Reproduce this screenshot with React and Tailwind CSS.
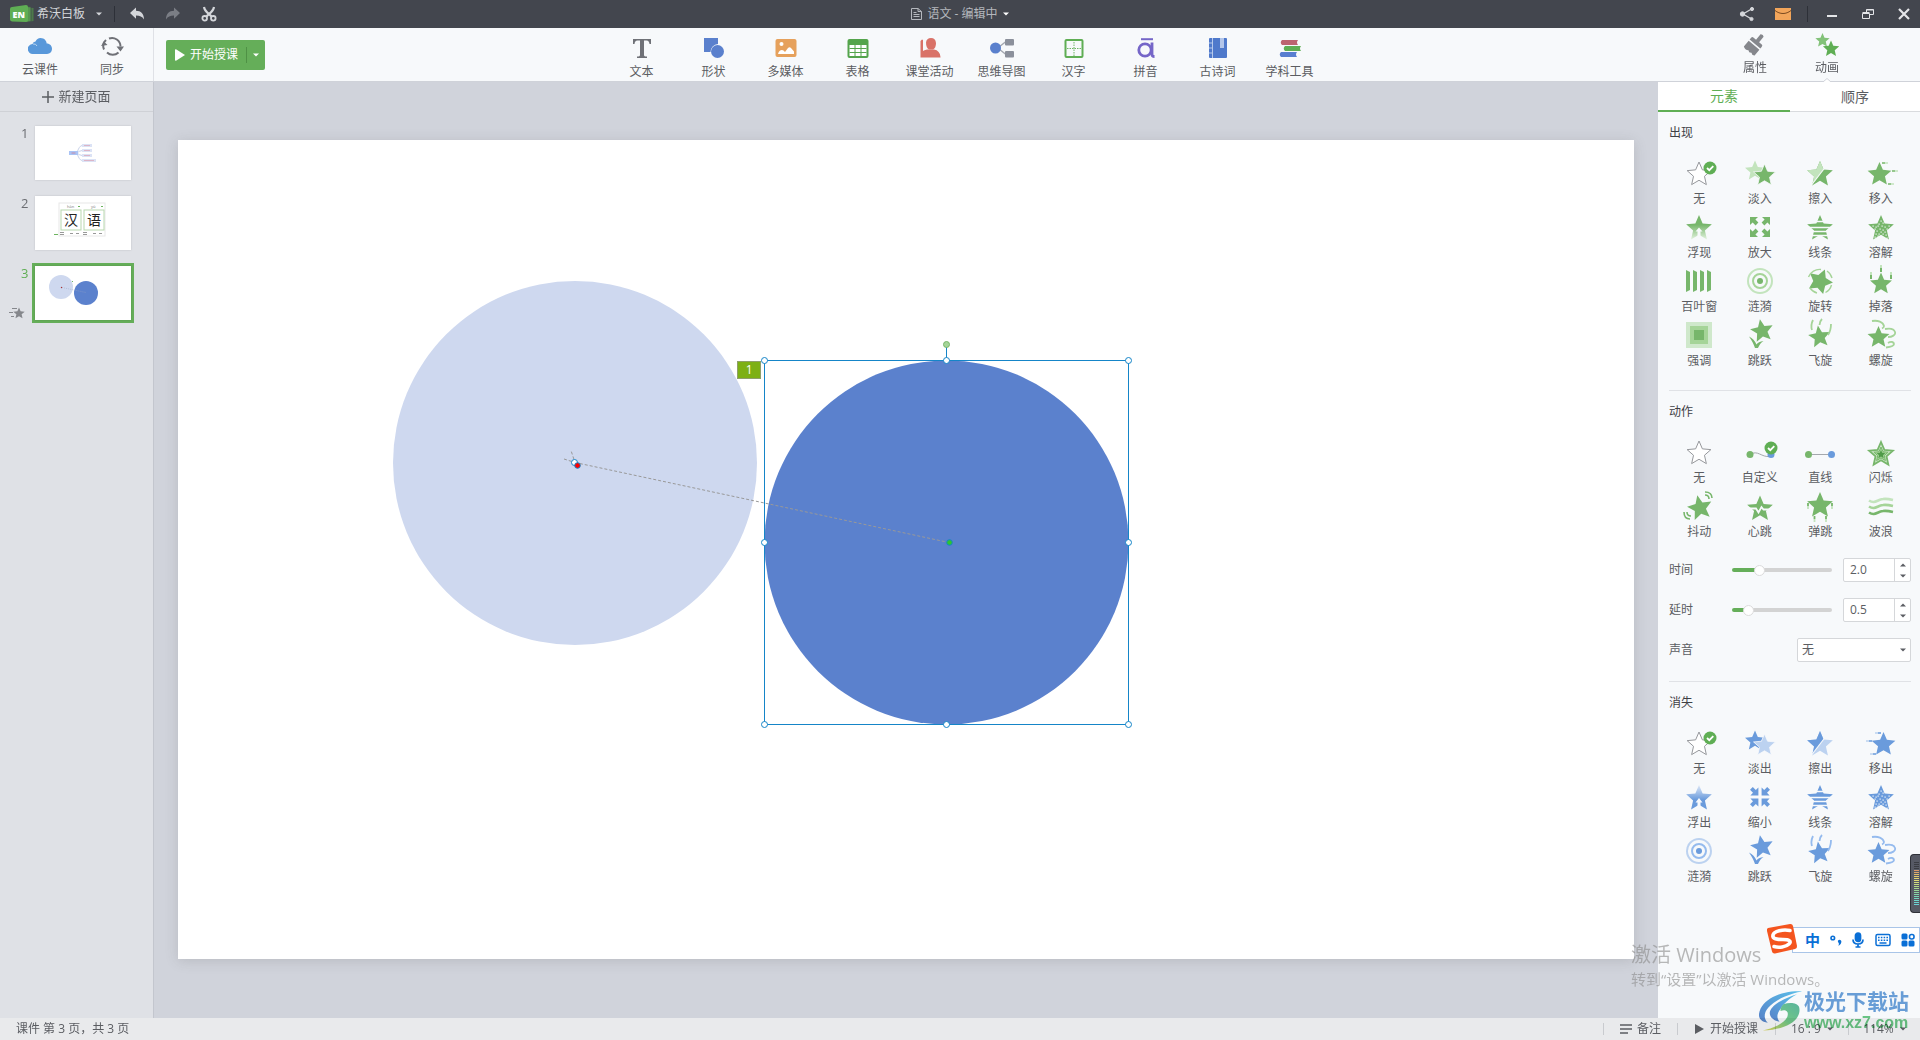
import React, { useState } from 'react';

const GREEN = { main: '#77b66b', mid: '#a5d498', light: '#c3e4bd' };
const BLUE = { main: '#6a9bdc', mid: '#95bbee', light: '#bcd2f0' };

// five pointed star around (cx, cy)
const star = (cx, cy, r, rot = 0, k = 0.46) => {
  const pts = [];
  for (let i = 0; i < 10; i++) {
    const a = ((i * 36 + rot - 90) * Math.PI) / 180;
    const d = i % 2 ? r * k : r;
    pts.push(`${(cx + d * Math.cos(a)).toFixed(2)} ${(cy + d * Math.sin(a)).toFixed(2)}`);
  }
  return `M${pts.join('L')}Z`;
};

const Check = ({ cy = 9 }) => (
  <g>
    <circle cx="31" cy={cy} r="6.5" fill="#5fae54" />
    <path d={`M28 ${cy}l2.3 2.2 4-4`} fill="none" stroke="#fff" strokeWidth="1.8" />
  </g>
);

const SPECKS = [
  [20, 8], [18, 11], [22, 10], [12, 13], [15, 14], [17, 13], [21, 13], [24, 14], [28, 13], [14, 16], [19, 16], [22, 17],
  [26, 16], [16, 18], [20, 19], [24, 19], [15, 21], [18, 21], [22, 21], [25, 22], [14, 24], [17, 23], [26, 25],
];

const DRAWINGS = {
  none: () => <path d={star(20, 15.5, 12.5)} fill="#fff" stroke="#96989c" strokeWidth="1" />,
  noneChecked: () => (
    <g>
      <path d={star(20, 15.5, 12.5)} fill="#fff" stroke="#96989c" strokeWidth="1" />
      <Check />
    </g>
  ),
  fadeIn: (c) => (
    <g>
      <path d={star(15, 12, 10.5)} fill={c.light} />
      <path d={star(24.5, 16.5, 11.5)} fill={c.main} stroke="#f7f9fb" strokeWidth="0.8" />
    </g>
  ),
  fadeOut: (c) => (
    <g>
      <path d={star(15, 12, 10.5)} fill={c.main} />
      <path d={star(24.5, 16.5, 11.5)} fill={c.light} stroke="#f7f9fb" strokeWidth="0.8" />
    </g>
  ),
  wipeIn: (c) => (
    <g>
      <path d={star(20, 15.5, 13.5)} fill={c.main} />
      <path d={star(20, 15.5, 13.5)} fill={c.light} clipPath="url(#wipe)" />
      <path d="M28.5 4L10 28" stroke="#f7f9fb" strokeWidth="1.2" />
    </g>
  ),
  wipeOut: (c) => (
    <g>
      <path d={star(20, 15.5, 13.5)} fill={c.light} />
      <path d={star(20, 15.5, 13.5)} fill={c.main} clipPath="url(#wipe)" />
      <path d="M28.5 4L10 28" stroke="#f7f9fb" strokeWidth="1.2" />
    </g>
  ),
  moveIn: (c) => (
    <g>
      <path d={star(18.5, 15.5, 12.5)} fill={c.main} />
      <path d="M21 4h3M31 12h3M27 25h3" stroke={c.main} strokeWidth="1.6" />
      <path d="M24 4h3M34 12h3M30 25h3" stroke={c.light} strokeWidth="1.6" />
    </g>
  ),
  moveOut: (c) => (
    <g>
      <path d={star(22.5, 15.5, 12.5)} fill={c.main} />
      <path d="M17 4h3M8 12h3M12 25h3" stroke={c.main} strokeWidth="1.6" />
      <path d="M14 4h3M5 12h3M9 25h3" stroke={c.light} strokeWidth="1.6" />
    </g>
  ),
  floatIn: () => (
    <g>
      <path d={star(20, 15.5, 13.5)} fill="url(#floatGreen)" />
      <path d="M20 14.5l3.5 4h-2v7h-3v-7h-2z" fill="#f7f9fb" />
    </g>
  ),
  floatOut: () => (
    <g>
      <path d={star(20, 15.5, 13.5)} fill="url(#floatBlue)" />
      <path d="M20 15l3.5 4.5h-2V28h-3v-8.5h-2z" fill="#f7f9fb" />
    </g>
  ),
  zoomIn: (c) => (
    <g fill={c.main}>
      {[0, 90, 180, 270].map((a) => (
        <path key={a} d="M10 4h8l-2.6 2.6 3 3-2.8 2.8-3-3L10 12z" transform={`rotate(${a} 20 14)`} />
      ))}
    </g>
  ),
  zoomOut: (c) => (
    <g fill={c.main}>
      {[0, 90, 180, 270].map((a) => (
        <path key={a} d="M18.4 12.4h-8l2.6-2.6-3-3L12.8 4l3 3 2.6-2.6z" transform={`rotate(${a} 20 14)`} />
      ))}
    </g>
  ),
  lines: (c) => (
    <g>
      <path d={star(20, 15.5, 13.5)} fill={c.main} />
      <path d="M6 8.5h28M6 14.5h28M6 18.5h28M6 22.5h28" stroke="#f7f9fb" strokeWidth="1.3" />
    </g>
  ),
  dissolve: (c) => (
    <g>
      <path d={star(20, 15.5, 13.5)} fill={c.main} />
      {SPECKS.map(([x, y]) => (
        <rect key={`${x}-${y}`} x={x - 0.5} y={y - 0.5} width="1.2" height="1.2" fill="#f7f9fb" />
      ))}
    </g>
  ),
  blinds: (c) => (
    <path d="M7 3l4 2v18l-4 2zM14 3l4 2v18l-4 2zM21 3l4 2v18l-4 2zM28 3l4 2v18l-4 2z" fill={c.main} />
  ),
  ripple: (c) => (
    <g fill="none" strokeWidth="2">
      <circle cx="20" cy="14" r="12" stroke={c.light} />
      <circle cx="20" cy="14" r="7" stroke={c.mid} />
      <circle cx="20" cy="14" r="3" fill={c.main} />
    </g>
  ),
  rotate: (c) => (
    <g>
      <path d={star(20, 14.5, 13, 22, 0.52)} fill={c.main} />
      <g fill="none" stroke={c.mid} strokeWidth="1.4">
        <path d="M8.5 10A12 12 0 0 1 21 2.500M27 4a12 12 0 0 1 5 7M31.500 18a12 12 0 0 1-6 7.500M17 26a12 12 0 0 1-7-5" />
      </g>
    </g>
  ),
  drop: (c) => (
    <g>
      <path d={star(20, 17, 11.5)} fill={c.main} />
      <path d="M20 1v4M10 8v4M30 8v4" stroke={c.main} strokeWidth="2" />
      <path d="M20-2v3M10 5v3M30 5v3" stroke={c.light} strokeWidth="2" />
    </g>
  ),
  emphasis: (c) => (
    <g>
      <rect x="7" y="1" width="26" height="26" fill="#cfe8cb" />
      <rect x="11" y="5" width="18" height="18" fill={c.mid} />
      <rect x="15" y="9" width="10" height="10" fill={c.main} />
    </g>
  ),
  jump: (c) => (
    <g fill={c.main}>
      <path d={star(22, 10, 12, -10)} />
      <path d="M9 15.500c3.500 1.500 6 4.500 7.500 8 1-1.800 3.500-3.200 7-3.500-2.500 1.500-4 3.500-5.500 7h-3c-1.500-4-3-7.500-6-11.500z" />
    </g>
  ),
  fly: (c) => (
    <g>
      <path d={star(19.5, 16, 11.5, -8)} fill={c.main} />
      <path d="M13-1c-2 4-2 7-1 10M22-2c-2 2-2.5 4-2.5 6M31 3c0 5-1 8-3 11" fill="none" stroke={c.mid} strokeWidth="1.8" />
    </g>
  ),
  spiral: (c) => (
    <g>
      <path d={star(17.5, 16.5, 11.5)} fill={c.main} />
      <path d="M11 0c6-1 11 1 12 5 0 1-1 2-2 2.5" fill="none" stroke={c.mid} strokeWidth="1.8" />
      <path d="M24 8c5-1 9 0 10 3s-3 5-7 5M27 22c3-2 6-1 6 1s-4 3-8 3.5" fill="none" stroke={c.mid} strokeWidth="1.8" />
    </g>
  ),
  custom: () => (
    <g>
      <path d="M10 16.5c8-5 11 3 20 2" fill="none" stroke="#a4a8ad" />
      <circle cx="10" cy="16.5" r="3.5" fill="#77b66b" />
      <circle cx="31" cy="16.5" r="3.5" fill="#6a9bdc" />
      <Check cy={10} />
    </g>
  ),
  straight: () => (
    <g>
      <path d="M9 16.5h22" stroke="#a4a8ad" />
      <circle cx="8.5" cy="16.5" r="3.5" fill="#77b66b" />
      <circle cx="31.5" cy="16.5" r="3.5" fill="#6a9bdc" />
    </g>
  ),
  flash: (c) => (
    <g>
      <path d={star(20, 16.5, 12.5)} fill="#cfe8cb" stroke={c.main} strokeWidth="1.8" />
      <path d={star(20, 16.5, 7.5)} fill={c.mid} stroke={c.main} strokeWidth="1" />
      <path d={star(20, 16.5, 4.5)} fill="#4f9b48" />
    </g>
  ),
  shake: (c) => (
    <g>
      <path d={star(21, 16, 13, -12)} fill={c.main} />
      <path d="M26 3c3 0 4 2 4 4M26 0c5 0 7 3 7 6M8 20c0 3 1 4 4 4M5 20c0 5 2 7 6 7" fill="none" stroke={c.main} strokeWidth="1.6" />
    </g>
  ),
  heartbeat: (c) => (
    <g>
      <path d={star(20, 17, 13.5)} fill={c.main} />
      <path d="M7 16.500h9l2.500 4 3-5.500 2 2.500h11" fill="none" stroke="#f7f9fb" strokeWidth="1.8" />
    </g>
  ),
  bounce: (c) => (
    <g>
      <path d={star(20, 13.5, 13.5)} fill={c.main} />
      <path d="M8 11v3M32 11v3M14.5 24v3M26 24v3" stroke={c.main} strokeWidth="1.8" />
      <path d="M8 14v3M32 14v3M14.5 27v3M26 27v3" stroke={c.light} strokeWidth="1.8" />
    </g>
  ),
  wave: (c) => (
    <g fill="none" strokeWidth="2.6">
      <path d="M8 8.500c6 4 8-1 14-1.500 4-.5 6 0 10 1" stroke={c.light} />
      <path d="M8 14.500c6 4 8-1 14-1.500 4-.5 6 0 10 1" stroke={c.mid} />
      <path d="M8 20.500c6 4 8-1 14-1.500 4-.5 6 0 10 1" stroke={c.main} />
    </g>
  ),
};

const APPEAR = [
  ['noneChecked', '无'], ['fadeIn', '淡入'], ['wipeIn', '擦入'], ['moveIn', '移入'],
  ['floatIn', '浮现'], ['zoomIn', '放大'], ['lines', '线条'], ['dissolve', '溶解'],
  ['blinds', '百叶窗'], ['ripple', '涟漪'], ['rotate', '旋转'], ['drop', '掉落'],
  ['emphasis', '强调'], ['jump', '跳跃'], ['fly', '飞旋'], ['spiral', '螺旋'],
];

const ACTIONS = [
  ['none', '无'], ['custom', '自定义'], ['straight', '直线'], ['flash', '闪烁'],
  ['shake', '抖动'], ['heartbeat', '心跳'], ['bounce', '弹跳'], ['wave', '波浪'],
];

const DISAPPEAR = [
  ['noneChecked', '无'], ['fadeOut', '淡出'], ['wipeOut', '擦出'], ['moveOut', '移出'],
  ['floatOut', '浮出'], ['zoomOut', '缩小'], ['lines', '线条'], ['dissolve', '溶解'],
  ['ripple', '涟漪'], ['jump', '跳跃'], ['fly', '飞旋'], ['spiral', '螺旋'],
];

const Caret = ({ className = '' }) => (
  <svg className={`w-[6px] h-[4px] ${className}`} viewBox="0 0 6 4" fill="currentColor">
    <path d="M0 .5h6L3 3.5z" />
  </svg>
);

const TitleBar = () => (
  <div className="flex items-center h-7 px-2 bg-[#43464e] text-[#d4d6da] text-xs">
    <div className="flex flex-1 items-center">
      <button className="flex items-center pl-[2px]">
        <svg className="w-6 h-[18px]" viewBox="0 0 24 18">
          <path d="M18 2.5l5.5.5v13l-5.5 1z" fill="#4c7a4a" />
          <path d="M17 1.5l4 .5v14.5l-4 .5z" fill="#569650" stroke="#43464e" strokeWidth="0.7" />
          <path d="M2 2L16 0q2 0 2 2v13.5q0 1.500-2 1.500L2 16.500Q0 16 0 14.500V4Q0 2.200 2 2z" fill="#5fae54" />
          <text x="2.5" y="12.5" fontSize="9" fontWeight="800" fill="#fff" fontFamily="Open Sans, sans-serif">EN</text>
        </svg>
        <span className="ml-[3px]">希沃白板</span>
        <Caret className="ml-[11px]" />
      </button>
      <div className="w-px h-4 ml-3 mr-[14px] bg-[#2d3038]" />
      <div className="flex gap-5">
        <button aria-label="撤销">
          <svg className="w-4 h-4" viewBox="0 0 16 16" fill="#d4d6da">
            <path d="M1 7l6-5.5v3.300c5 0 8 3 8 8.700-1.800-3-4-4-8-4v3.300z" />
          </svg>
        </button>
        <button aria-label="重做">
          <svg className="w-4 h-4" viewBox="0 0 16 16" fill="#7b7e85">
            <path d="M15 7L9 1.5v3.300c-5 0-8 3-8 8.700 1.800-3 4-4 8-4v3.300z" />
          </svg>
        </button>
        <button aria-label="剪切">
          <svg className="w-4 h-4" viewBox="0 0 16 16" fill="none" stroke="#d4d6da" strokeWidth="1.8">
            <circle cx="3.7" cy="12.3" r="2.3" />
            <circle cx="12.3" cy="12.3" r="2.3" />
            <path d="M3 1c.5 4 4 6 7.5 9.500M13 1c-.5 4-4 6-7.500 9.500" strokeWidth="2.2" />
          </svg>
        </button>
      </div>
    </div>
    <button className="flex items-center text-[#b4b7bd]">
      <svg className="w-[11px] h-3 mr-[5px]" viewBox="0 0 11 12" fill="none" stroke="currentColor">
        <path d="M.5.5H7l3.500 3v8H.5zM7 .5v3h3.500M2.500 4.500h3M2.500 6.500h6M2.500 8.500h6" />
      </svg>
      语文 - 编辑中
      <Caret className="ml-[5px] text-white" />
    </button>
    <div className="flex flex-1 items-center justify-end gap-4">
      <div className="flex gap-5">
        <button aria-label="分享">
          <svg className="w-4 h-4" viewBox="0 0 16 16" fill="#d4d6da" stroke="#d4d6da">
            <path d="M12.5 3L4 8l8.500 5" fill="none" strokeWidth="1.3" />
            <circle cx="3.5" cy="8" r="2.2" />
            <circle cx="13" cy="3" r="1.6" />
            <circle cx="12.5" cy="13" r="1.6" />
          </svg>
        </button>
        <button aria-label="消息">
          <svg className="w-4 h-4" viewBox="0 0 16 16">
            <rect y="2" width="16" height="12" fill="#f2a55a" />
            <path d="M0 4.500c5 4 11 4 16 0" fill="none" stroke="#7a4a20" />
          </svg>
        </button>
      </div>
      <div className="w-px h-4 bg-[#2d3038]" />
      <div className="flex gap-5">
        <button aria-label="最小化">
          <svg className="w-4 h-4" viewBox="0 0 16 16"><path d="M3 10h10" stroke="#e4e5e8" strokeWidth="2" /></svg>
        </button>
        <button aria-label="还原">
          <svg className="w-4 h-4" viewBox="0 0 16 16" fill="none" stroke="#e4e5e8">
            <path d="M2.500 7.500h7v5h-7zM6.500 7V3.500h7v5H10M2.500 6.500h7" />
            <path d="M6.500 4h7" />
          </svg>
        </button>
        <button aria-label="关闭">
          <svg className="w-4 h-4" viewBox="0 0 16 16"><path d="M3 3l10 10M13 3L3 13" stroke="#e4e5e8" strokeWidth="2.2" /></svg>
        </button>
      </div>
    </div>
  </div>
);

const TOOLS = [
  {
    label: '文本',
    icon: <path d="M3 3h18v5h-1.500c-.3-2-1-3.500-3-3.500H14V19q0 1.500 3 1.500V22H7v-1.500q3 0 3-1.500V4.500H7.500c-2 0-2.700 1.500-3 3.500H3z" fill="#6f7177" />,
  },
  {
    label: '形状',
    icon: (
      <g fill="#5a80cd">
        <path d="M2 2h14v6a8 8 0 0 0-7.500 8H2z" />
        <circle cx="15.5" cy="15.5" r="6.5" />
      </g>
    ),
  },
  {
    label: '多媒体',
    icon: (
      <g>
        <rect x="1.5" y="3" width="21" height="18" rx="2" fill="#e6a15c" />
        <circle cx="7.5" cy="8" r="2" fill="#fff" />
        <path d="M4 18q1-4 4-4 1.500 0 3 2l3-4q1.500-1.500 3 0l3 3.500V18z" fill="#fff" />
      </g>
    ),
  },
  {
    label: '表格',
    icon: (
      <g>
        <rect x="1.5" y="3" width="21" height="19" rx="2" fill="#54a44c" />
        <path d="M3.500 9h17v11h-17z" fill="#fff" />
        <path d="M3.500 12.500h17M3.500 16.500h17M9 9v11M15 9v11" stroke="#54a44c" />
      </g>
    ),
  },
  {
    label: '课堂活动',
    icon: (
      <g fill="#d97268">
        <path d="M2.500 5L4 3.500 5 4v11q1-1 4-1.500h7q6 1 6.500 7.500v.5h-20z" />
        <path d="M8 6.500Q8.500 2 13 2t5 5q0 5-3 6.500h-4Q8 12 8 6.500z" />
      </g>
    ),
  },
  {
    label: '思维导图',
    icon: (
      <g>
        <path d="M9 11l7-5.500M9 13l7 5.500" stroke="#a4a8b0" strokeWidth="1.5" />
        <circle cx="5.5" cy="12" r="5.5" fill="#5a80cd" />
        <rect x="15" y="3" width="9" height="6.5" rx="1" fill="#8b909b" />
        <rect x="15" y="15" width="9" height="6.5" rx="1" fill="#8b909b" />
      </g>
    ),
  },
  {
    label: '汉字',
    icon: (
      <g fill="none" stroke="#5fae54">
        <rect x="3.5" y="4" width="17" height="17" rx="1" strokeWidth="2" />
        <path d="M12 6v14M5 12.500h14" strokeDasharray="1.5 1" strokeWidth="0.9" />
      </g>
    ),
  },
  {
    label: '拼音',
    icon: (
      <g fill="none" stroke="#7566c8" strokeWidth="2.8">
        <path d="M7 3.200h12" strokeWidth="2" />
        <circle cx="11" cy="14" r="6.2" />
        <path d="M18 6.500v12q0 2 2.500 2" />
      </g>
    ),
  },
  {
    label: '古诗词',
    icon: (
      <g>
        <rect x="3" y="2" width="18" height="20" rx="1" fill="#4f79cb" />
        <path d="M6.500 2v20M3 7h3.500M3 12h3.500M3 17h3.500" stroke="#c3d2ee" strokeWidth="0.9" />
        <path d="M14 2h4v10h-4z" fill="#b3c6ea" />
      </g>
    ),
  },
  {
    label: '学科工具',
    icon: (
      <g>
        <path d="M4 4h16q-2 2.500 0 5H4q-2.500-2.500 0-5z" fill="#bd6470" />
        <path d="M7 10h16q-2 2.500 0 5H7q-2.500-2.500 0-5z" fill="#5fae54" />
        <path d="M3 16h16q-2 2.500 0 5H3q-2.500-2.500 0-5z" fill="#587ed0" />
      </g>
    ),
  },
];

const ToolButton = ({ label, children, className = 'pt-2' }) => (
  <button className={`flex flex-col items-center w-[72px] shrink-0 ${className}`}>
    <svg className="w-6 h-6" viewBox="0 0 24 24">{children}</svg>
    <span className="leading-4 mt-1 whitespace-nowrap">{label}</span>
  </button>
);

const Toolbar = () => (
  <header className="flex h-[54px] bg-[#f7f9fb] border-b border-[#cfd2d9] text-xs text-[#5b5d62]">
    <div className="flex w-[154px] pl-1 pr-[5px] shrink-0 border-r border-[#dfe1e6]">
      <ToolButton label="云课件" className="pt-[6px]">
        <path d="M5 20a5 5 0 0 1-.5-10Q5 7.500 7.500 7.500 9 4 12.500 4c4 0 6 3 6.200 5.500C22 9.500 24 12 24 14.800S22 20 19 20z" fill="#5898da" />
        <path d="M5 10q3-.5 4 2" fill="none" stroke="#b9d6f2" />
      </ToolButton>
      <ToolButton label="同步" className="pt-[6px]">
        <g fill="none" stroke="#6f7177" strokeWidth="2">
          <path d="M4 15.500A8.500 8.500 0 0 1 6 6M9 4.500a8.500 8.500 0 0 1 11.500 8M18.500 18.500A8.500 8.500 0 0 1 7 18.500" />
        </g>
        <path d="M1 12l6.500-1L4 7.500zM16.500 12.500H24l-3.500 5z" fill="#6f7177" />
      </ToolButton>
    </div>
    <div className="flex items-center pl-3">
      <div className="flex items-center h-[30px] rounded-[2px] bg-[#65ae59] text-white">
        <button className="flex items-center h-full pl-[9px] pr-2">
          <svg className="w-[10px] h-3 mr-[5px]" viewBox="0 0 10 12"><path d="M0 1q0-1 1-.8L10 6 1 11.800Q0 12 0 11z" fill="#fff" /></svg>
          开始授课
        </button>
        <div className="w-px h-4 bg-[#4f9145]" />
        <button className="flex items-center h-full px-[6px]" aria-label="更多授课方式">
          <Caret />
        </button>
      </div>
    </div>
    <nav className="flex flex-1 justify-center">
      {TOOLS.map((tool) => (
        <ToolButton key={tool.label} label={tool.label}>{tool.icon}</ToolButton>
      ))}
    </nav>
    <div className="flex justify-center w-[254px] pr-1 shrink-0">
      <ToolButton label="属性" className="pt-1">
        <g fill="#85878c" transform="rotate(40 12 12)">
          <path d="M10 1q2-2 4 0v7h3.500q1.500 0 1.500 2v2H5v-2q0-2 1.500-2H10z" />
          <path d="M5 13.500h14V21q-2 2-4 0-2 2-4 0-3 2-6 0z" />
        </g>
      </ToolButton>
      <div className="relative flex">
        <ToolButton label="动画" className="pt-1">
          <path d={star(7.5, 8.5, 7.5)} fill="#83c279" />
          <path d={star(16, 17, 8.5)} fill="#5fae54" />
        </ToolButton>
        <svg className="absolute -bottom-px left-8 w-2 h-1" viewBox="0 0 8 4">
          <path d="M0 4l4-3.500L8 4" fill="#fff" stroke="#cfd2d9" />
        </svg>
      </div>
    </div>
  </header>
);

const MindMapThumb = () => (
  <svg className="w-full h-full" viewBox="0 0 96 54">
    <path d="M42 27q2-7 5-7.500M42 27q2-2 5-2.500M42 27q2 2 5 2.500M42 27q2 7 5 7.500" fill="none" stroke="#c9d2ea" />
    <rect x="34" y="25" width="9" height="4" fill="#a9c3f5" />
    <path d="M36.500 27h4" stroke="#c48aa8" />
    <g fill="#dbe2f5">
      <rect x="47" y="18" width="10" height="3" />
      <rect x="47" y="23" width="10" height="3" />
      <rect x="47" y="28" width="10" height="3" />
      <rect x="47" y="33" width="14" height="3" />
    </g>
    <path d="M49 19.500h6M49 24.500h6M49 29.500h6M49 34.500h10" stroke="#dba9bd" strokeWidth="0.8" />
  </svg>
);

const HanziThumb = () => (
  <svg className="w-full h-full" viewBox="0 0 96 54">
    <rect x="24" y="7" width="46" height="33" fill="#fff" stroke="#e8e8e8" />
    <g fill="#fff" stroke="#b7d8ae">
      <rect x="26" y="14" width="20" height="20" />
      <rect x="49" y="14" width="20" height="20" />
    </g>
    <text x="29" y="29" fontSize="14" fontFamily="Noto Sans CJK SC, sans-serif" fill="#222">汉</text>
    <text x="52" y="29" fontSize="14" fontFamily="Noto Sans CJK SC, sans-serif" fill="#222">语</text>
    <text x="32" y="12" fontSize="4" fill="#777">hàn</text>
    <text x="56" y="12" fontSize="4" fill="#777">yǔ</text>
    <path d="M25 36.500h4M25 38.500h4M35 37.500h3M41 37.500h3M48 36.500h4M48 38.500h4M58 37.500h3M64 37.500h3" stroke="#999" />
    <path d="M19 38.500h4M43 10.500h2M66 10.500h2" stroke="#6cb45f" />
  </svg>
);

const CirclesThumb = () => (
  <svg className="w-full h-full" viewBox="0 0 96 54">
    <circle cx="26" cy="21" r="12" fill="#ced8ef" />
    <circle cx="51" cy="27" r="12" fill="#5b81cd" />
    <path d="M27 21.500l24 5" stroke="#9aa7c4" strokeWidth="0.5" strokeDasharray="1 1" />
    <circle cx="26.5" cy="21.5" r="0.7" fill="#a33" />
    <rect x="37" y="15" width="1" height="1" fill="#6cb45f" />
  </svg>
);

const PAGES = [MindMapThumb, HanziThumb, CirclesThumb];

const Sidebar = () => (
  <aside className="w-[154px] shrink-0 bg-[#dfe1e6] border-r border-[#c3c6ce]">
    <button className="flex items-center justify-center w-full h-[30px] border-b border-[#cfd1d6] text-[13px] text-[#5b5d62]">
      <svg className="w-3 h-3 mr-1" viewBox="0 0 12 12"><path d="M6 0v12M0 6h12" stroke="#5b5d62" strokeWidth="1.5" /></svg>
      新建页面
    </button>
    <ol className="flex flex-col gap-[10px] pt-[11px]">
      {PAGES.map((Thumb, i) => {
        const active = i === 2;
        return (
          <li key={i} className="flex">
            <div className={`flex flex-col justify-between w-8 text-[13px] ${active ? 'text-[#5fae54]' : 'text-[#6b6d72]'}`}>
              <span className="pl-[21px] leading-5">{i + 1}</span>
              {active && (
                <svg className="w-4 h-3 ml-[9px] mb-1" viewBox="0 0 16 12">
                  <path d={star(10, 6.5, 6)} fill="#85878c" />
                  <path d="M3 1.500h5M0 5.500h4M2 9.500h3" stroke="#85878c" />
                </svg>
              )}
            </div>
            <button
              aria-label={`第 ${i + 1} 页`}
              className={`w-[102px] h-[60px] border-[3px] ${active ? 'border-[#65ae59]' : 'border-transparent'}`}
            >
              <span className="block w-full h-full bg-white shadow-[0_0_2px_rgba(0,0,0,0.15)]">
                <Thumb />
              </span>
            </button>
          </li>
        );
      })}
    </ol>
  </aside>
);

const HANDLES = [
  [586, 220], [768, 220], [950, 220],
  [586, 402], [950, 402],
  [586, 584], [768, 584], [950, 584],
];

const Stage = () => (
  <main className="flex flex-1 items-center min-w-0 px-6 pb-[2px] bg-[#d0d3db]">
    <div className="relative w-full aspect-video bg-white shadow-[0_2px_12px_rgba(80,80,80,0.18)]">
      <svg className="block w-full h-full" viewBox="0 0 1456 819">
        <circle cx="397" cy="323" r="182" fill="#ced8ef" />
        <circle cx="768.5" cy="402.5" r="182" fill="#5b81cd" />
        <g fill="none" stroke="#999" strokeDasharray="3 2">
          <path d="M397 322.500L771 402.500" />
          <path d="M386 319l11 3.500-4-12" />
        </g>
        <rect x="586.5" y="220.5" width="364" height="364" fill="none" stroke="#1585c8" />
        <path d="M768.500 204v16" stroke="#1585c8" />
        <circle cx="768.5" cy="204.5" r="3" fill="#a5d498" stroke="#77b66b" />
        {HANDLES.map(([x, y]) => (
          <circle key={`${x}-${y}`} cx={x + 0.5} cy={y + 0.5} r="3" fill="#fff" stroke="#1585c8" />
        ))}
        <circle cx="396.5" cy="322.5" r="3" fill="#fff" stroke="#1585c8" />
        <circle cx="399.5" cy="325.5" r="2.8" fill="#f00" stroke="#1585c8" />
        <circle cx="771.5" cy="402.5" r="2.8" fill="#2ec52e" stroke="#1585c8" />
      </svg>
      <span className="absolute left-[38.4%] top-[27%] w-6 h-[18px] leading-4 border border-[#8f9f6b] bg-[#7db014] text-center text-xs text-white">
        1
      </span>
    </div>
  </main>
);

const EffectGrid = ({ items, color }) => (
  <div className="grid grid-cols-4">
    {items.map(([kind, label]) => (
      <button key={label} className="flex flex-col items-center h-[54px]">
        <svg className="w-10 h-7 overflow-visible" viewBox="0 0 40 28">{DRAWINGS[kind](color)}</svg>
        <span className="mt-1 leading-4">{label}</span>
      </button>
    ))}
  </div>
);

const Section = ({ title, children, last }) => (
  <section className={`pt-[13px] pb-[15px] ${last ? '' : 'border-b border-[#e0e2e6]'}`}>
    <h3 className="mb-[18px] leading-4 text-[#3e4045]">{title}</h3>
    {children}
  </section>
);

const SliderRow = ({ id, label, value, max, onChange }) => {
  const pct = 5 + (value / max) * 90;
  const step = (d) => onChange(Math.min(max, Math.max(0, value + d)));
  return (
    <div className="flex items-center h-6">
      <label htmlFor={id} className="flex-1">{label}</label>
      <input
        id={id}
        type="range"
        min="0"
        max={max}
        step="0.1"
        value={value}
        onChange={(e) => onChange(Number(e.target.value))}
        style={{ background: `linear-gradient(to right, #65ae59 ${pct}%, #d3d3d3 ${pct}%)` }}
        className="w-[100px] h-1 mr-[11px] appearance-none rounded-full [&::-webkit-slider-thumb]:appearance-none [&::-webkit-slider-thumb]:w-[11px] [&::-webkit-slider-thumb]:h-[11px] [&::-webkit-slider-thumb]:rounded-full [&::-webkit-slider-thumb]:bg-white [&::-webkit-slider-thumb]:border [&::-webkit-slider-thumb]:border-[#dcdcdc]"
      />
      <div className="flex w-[68px] h-6 rounded-[2px] border border-[#d5d7da] bg-white">
        <input
          type="text"
          aria-label={`${label}（秒）`}
          value={value.toFixed(1)}
          onChange={(e) => onChange(Number(e.target.value) || 0)}
          className="flex-1 min-w-0 pl-[6px]"
        />
        <div className="flex flex-col w-4 border-l border-[#d5d7da]">
          <button className="flex flex-1 items-center justify-center" aria-label={`增加${label}`} onClick={() => step(0.1)}>
            <Caret className="rotate-180" />
          </button>
          <button className="flex flex-1 items-center justify-center" aria-label={`减少${label}`} onClick={() => step(-0.1)}>
            <Caret />
          </button>
        </div>
      </div>
    </div>
  );
};

const AnimationPanel = () => {
  const [duration, setDuration] = useState(2);
  const [delay, setDelay] = useState(0.5);

  return (
    <aside className="w-[262px] shrink-0 bg-[#f7f9fb] text-xs text-[#5b5d62]">
      <div className="flex h-[30px] bg-white text-sm" role="tablist">
        <button role="tab" aria-selected="true" className="w-[132px] border-b-2 border-[#5fae54] text-[#5fae54]">元素</button>
        <button role="tab" aria-selected="false" className="flex-1 border-b border-[#d9dbde]">顺序</button>
      </div>
      <div className="pl-[11px] pr-[9px]">
        <Section title="出现">
          <EffectGrid items={APPEAR} color={GREEN} />
        </Section>
        <Section title="动作">
          <EffectGrid items={ACTIONS} color={GREEN} />
          <div className="flex flex-col gap-4 mt-3 mb-1">
            <SliderRow id="duration" label="时间" value={duration} max={8} onChange={setDuration} />
            <SliderRow id="delay" label="延时" value={delay} max={4} onChange={setDelay} />
            <div className="flex items-center justify-between h-6">
              <label htmlFor="sound">声音</label>
              <div className="relative">
                <select id="sound" className="block w-[114px] h-6 pl-1 appearance-none rounded-[2px] border border-[#d5d7da] bg-white">
                  <option>无</option>
                </select>
                <Caret className="absolute right-[5px] top-[10px] pointer-events-none" />
              </div>
            </div>
          </div>
        </Section>
        <Section title="消失" last>
          <EffectGrid items={DISAPPEAR} color={BLUE} />
        </Section>
      </div>
    </aside>
  );
};

const StatusBar = () => (
  <footer className="flex items-center justify-between h-[22px] pl-4 bg-[#e9eaec] text-xs text-[#5b5d62]">
    <span>课件 第 3 页，共 3 页</span>
    <div className="flex items-center leading-3">
      <button className="flex items-center justify-center w-[74px] border-l border-[#c9cbcf]">
        <svg className="w-3 h-3 mr-[5px]" viewBox="0 0 12 12"><path d="M0 2h12M0 6h12M0 10h8" stroke="#5b5d62" strokeWidth="1.5" /></svg>
        备注
      </button>
      <button className="flex items-center justify-center w-[98px] border-l border-[#c9cbcf]">
        <svg className="w-[9px] h-[10px] mr-[6px]" viewBox="0 0 9 10"><path d="M0 0l9 5-9 5z" fill="#5b5d62" /></svg>
        开始授课
      </button>
      <button className="flex items-center justify-center w-[73px] border-l border-[#c9cbcf]">
        16 : 9
        <Caret className="ml-[6px]" />
      </button>
      <button className="flex items-center justify-center w-[72px] border-l border-[#c9cbcf]">
        114%
        <Caret className="ml-[6px]" />
      </button>
    </div>
  </footer>
);

const METER = [
  '#3a3c42', '#3a3c42', '#3a3c42', '#3a3c42', '#d99a6a', '#dca76b', '#e0bd6c', '#e2cb6e', '#e2d672', '#dfdc76', '#d3dd7c', '#c5dc82',
  '#b5da88', '#a6d88e', '#98d696', '#8cd59f', '#82d5aa', '#7ad5b4', '#73d6be', '#6fd6c8', '#6cd4d0', '#6ad0d4',
];

const VolumeMeter = () => (
  <div className="fixed right-0 bottom-[127px] flex flex-col gap-px w-[10px] h-[59px] pt-[7px] pl-[3px] rounded-l border border-r-0 border-[#2f3138] bg-[#565964]">
    {METER.map((c) => c).map((c, i) => (
      <span key={i} className="w-[5px] h-px shrink-0" style={{ background: c }} />
    ))}
  </div>
);

const ImeBar = () => (
  <div className="fixed right-0 bottom-[87px] flex items-center justify-between w-[128px] h-[26px] pl-3 pr-1 border border-[#a9c5e8] bg-white">
    <svg className="absolute -left-[27px] -top-[5px] w-8 h-8" viewBox="0 0 32 32">
      <path d="M2 5L24 1q2.500-.3 3 2l4 20q.3 2.500-2 3L9 30.500q-2.500.3-3-2L1 8q-.5-2.500 1-3z" fill="#f4551f" />
      <path d="M24 7.500C17 6 8 8 7 12s4 4.500 10 4.500 9 1.500 6 4.500-10 4-15 2.500" fill="none" stroke="#fff" strokeWidth="3.6" strokeLinecap="round" />
    </svg>
    <button className="text-[15px] leading-4 font-bold text-[#0a6fd6]">中</button>
    <svg className="w-3 h-4" viewBox="0 0 12 16">
      <circle cx="2.8" cy="6" r="1.8" fill="none" stroke="#0a6fd6" strokeWidth="1.6" />
      <path d="M8 8.500q1.500-1.500 3 0 1.500 3-2.500 5.500.5-1.500.3-3-1.300-1-.8-2.500z" fill="#0a6fd6" />
    </svg>
    <svg className="w-3 h-4" viewBox="0 0 12 16" fill="none" stroke="#0a6fd6" strokeWidth="1.7">
      <rect x="3.5" y="1" width="5" height="8.5" rx="2.5" fill="#0a6fd6" />
      <path d="M1 7.500q0 4.500 5 4.500t5-4.500M6 12v3M3.500 15h5" />
    </svg>
    <svg className="w-4 h-4" viewBox="0 0 16 16" fill="none" stroke="#0a6fd6" strokeWidth="1.5">
      <rect x="1" y="2.5" width="14" height="11" rx="1.5" />
      <path d="M3 5.500h10M3 8.200h10" strokeDasharray="1.6 1.2" />
      <path d="M4.500 11h7" />
    </svg>
    <svg className="w-[14px] h-[14px]" viewBox="0 0 14 14" fill="#0a6fd6">
      <rect x="0.5" y="0.5" width="6" height="6" rx="1.5" />
      <rect x="8.5" y="1.5" width="4.5" height="4.5" rx="2" fill="none" stroke="#0a6fd6" strokeWidth="1.6" />
      <rect x="0.5" y="7.5" width="6" height="6" rx="1.5" />
      <rect x="7.5" y="7.5" width="6" height="6" rx="1.5" />
    </svg>
  </div>
);

const Watermarks = () => (
  <>
    <div className="fixed right-0 bottom-[51px] w-[289px] pointer-events-none whitespace-nowrap text-[#8a8a8a]/60">
      <p className="text-xl leading-7">激活 Windows</p>
      <p className="text-[15px] leading-5">转到“设置”以激活 Windows。</p>
    </div>
    {/* multiplied so the zoom controls below stay readable */}
    <div className="fixed right-[11px] bottom-[7px] flex items-center gap-px pointer-events-none mix-blend-multiply">
      <svg className="w-[45px] h-[42px]" viewBox="0 0 46 42">
        <path d="M45 1C25 0 4 8 1 24c-.5 5 3 8 9 9-5-5-4-12 3-18C21 8 33 3 45 1z" fill="url(#swooshBlue)" />
        <path d="M40 4C27 8 13 15 12 23c0 5 5 8 10 9-3-4-3-8 1-13 3-5 9-11 17-15z" fill="url(#swooshBlue)" />
        <path d="M26 14c6-2 14-2 16 3 3 11-9 23-37 24 10-2 22-7 25-14 2-6-2-8-7-6 0-3 1-5 3-7z" fill="url(#swooshGreen)" />
      </svg>
      <div>
        <p className="text-[21px] leading-6 font-bold text-[#6ba1da]">极光下载站</p>
        <p className="text-base leading-5 font-bold text-[#6cc986] font-['Liberation_Sans',sans-serif]">www.xz7.com</p>
      </div>
    </div>
  </>
);

const Gradients = () => (
  <svg className="absolute w-0 h-0" aria-hidden="true">
    <defs>
      <linearGradient id="floatGreen" x1="0" y1="0" x2="0" y2="1">
        <stop offset="0.4" stopColor="#77b66b" />
        <stop offset="1" stopColor="#e2f2de" />
      </linearGradient>
      <linearGradient id="floatBlue" x1="0" y1="0" x2="0" y2="1">
        <stop offset="0" stopColor="#dfe9f8" />
        <stop offset="0.6" stopColor="#6a9bdc" />
      </linearGradient>
      <linearGradient id="swooshBlue" x1="1" y1="0" x2="0" y2="1">
        <stop offset="0" stopColor="#5cc4ee" />
        <stop offset="1" stopColor="#5a84cc" />
      </linearGradient>
      <linearGradient id="swooshGreen" x1="1" y1="0" x2="0" y2="1">
        <stop offset="0" stopColor="#5bb8a0" />
        <stop offset="0.5" stopColor="#74cc88" />
        <stop offset="1" stopColor="#e6dc5a" />
      </linearGradient>
      <clipPath id="wipe">
        <path d="M0 0h31.600L10 28H0z" />
      </clipPath>
    </defs>
  </svg>
);

const App = () => (
  <div className="flex flex-col min-h-screen font-['Open_Sans','Noto_Sans_CJK_SC',sans-serif]">
    <Gradients />
    <TitleBar />
    <Toolbar />
    <div className="flex flex-1">
      <Sidebar />
      <Stage />
      <AnimationPanel />
    </div>
    <StatusBar />
    <Watermarks />
    <VolumeMeter />
    <ImeBar />
  </div>
);

export default App;
